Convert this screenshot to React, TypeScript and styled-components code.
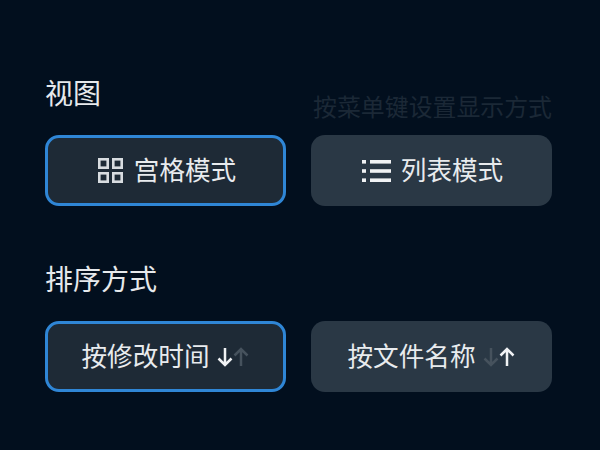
import React from "react"
import styled, { createGlobalStyle } from "styled-components"

const GlobalStyle = createGlobalStyle`
	html, body {
		margin: 0;
		padding: 0;
		background: #020f1e;
	}
`

const Page = styled.div`
	width: 600px;
	height: 450px;
	box-sizing: border-box;
	padding: 73px 48px 0 45px;
	background: #020f1e;
	overflow: hidden;
	font-family: "Noto Sans CJK SC", "Liberation Sans", sans-serif;
	color: #e4e8ec;
`

const Section = styled.section`
	display: flex;
	flex-direction: column;
	margin-bottom: 53px;
`

const Header = styled.div`
	display: flex;
	justify-content: space-between;
	align-items: flex-start;
	height: 62px;
`

const Title = styled.h2`
	margin: 0;
	font-size: 28px;
	font-weight: 400;
	line-height: 38px;
	color: #e6e9ec;
`

const Hint = styled.span`
	margin-top: 16px;
	font-size: 23.9px;
	line-height: 34px;
	color: #1b2836;
	white-space: nowrap;
`

const ButtonRow = styled.div`
	display: grid;
	grid-template-columns: 241px 241px;
	gap: 25px;
`

const OptionButton = styled.button<{ $active?: boolean; $gap: number; $inset?: number }>`
	height: 71px;
	box-sizing: border-box;
	display: flex;
	align-items: center;
	justify-content: center;
	gap: ${(props) => props.$gap}px;
	padding: 0 0 0 ${(props) => props.$inset ?? 0}px;
	border-radius: 14px;
	border: ${(props) => (props.$active ? "3px solid #2f86d6" : "none")};
	background: ${(props) => (props.$active ? "#1e2a36" : "#2a3845")};
	color: #e8ebee;
	font-family: inherit;
	font-size: 25.6px;
	line-height: 38px;
`

const Label = styled.span`
	padding-bottom: 4px;
`

const Arrows = styled.span`
	display: inline-flex;
	align-items: center;
`

const GridIcon = () => (
	<svg width="25" height="25" viewBox="0 0 25 25" fill="none" stroke="#d8dce0" strokeWidth="2.6">
		<rect x="1.3" y="1.3" width="8.4" height="8.4" />
		<rect x="15.3" y="1.3" width="8.4" height="8.4" />
		<rect x="1.3" y="15.3" width="8.4" height="8.4" />
		<rect x="15.3" y="15.3" width="8.4" height="8.4" />
	</svg>
)

const ListIcon = () => (
	<svg width="29" height="26" viewBox="0 0 29 26" fill="#f0f2f4">
		<rect x="0" y="2" width="4" height="3.6" />
		<rect x="0" y="11.2" width="4" height="3.6" />
		<rect x="0" y="20.4" width="4" height="3.6" />
		<rect x="8" y="2" width="21" height="3.6" />
		<rect x="8" y="11.2" width="21" height="3.6" />
		<rect x="8" y="20.4" width="21" height="3.6" />
	</svg>
)

const Arrow = ({ up, on }: { up?: boolean; on: boolean }) => (
	<svg
		width="16"
		height="22"
		viewBox="0 0 16 22"
		fill="none"
		stroke={on ? "#f0f2f4" : "#46525d"}
		strokeWidth="2.5"
		style={{ transform: up ? "rotate(180deg)" : undefined }}
	>
		<path d="M8 2V19M1.5 12.5L8 19L14.5 12.5" />
	</svg>
)

const SortArrows = ({ down }: { down: boolean }) => (
	<Arrows>
		<Arrow on={down} />
		<Arrow up on={!down} />
	</Arrows>
)

export default function App() {
	return (
		<Page>
			<GlobalStyle />
			<Section>
				<Header>
					<Title>视图</Title>
					<Hint>按菜单键设置显示方式</Hint>
				</Header>
				<ButtonRow>
					<OptionButton $active $gap={11} $inset={3}>
						<GridIcon />
						<Label>宫格模式</Label>
					</OptionButton>
					<OptionButton $gap={10} $inset={2}>
						<ListIcon />
						<Label>列表模式</Label>
					</OptionButton>
				</ButtonRow>
			</Section>
			<Section>
				<Header>
					<Title>排序方式</Title>
				</Header>
				<ButtonRow>
					<OptionButton $active $gap={8}>
						<Label>按修改时间</Label>
						<SortArrows down />
					</OptionButton>
					<OptionButton $gap={8}>
						<Label>按文件名称</Label>
						<SortArrows down={false} />
					</OptionButton>
				</ButtonRow>
			</Section>
		</Page>
	)
}
